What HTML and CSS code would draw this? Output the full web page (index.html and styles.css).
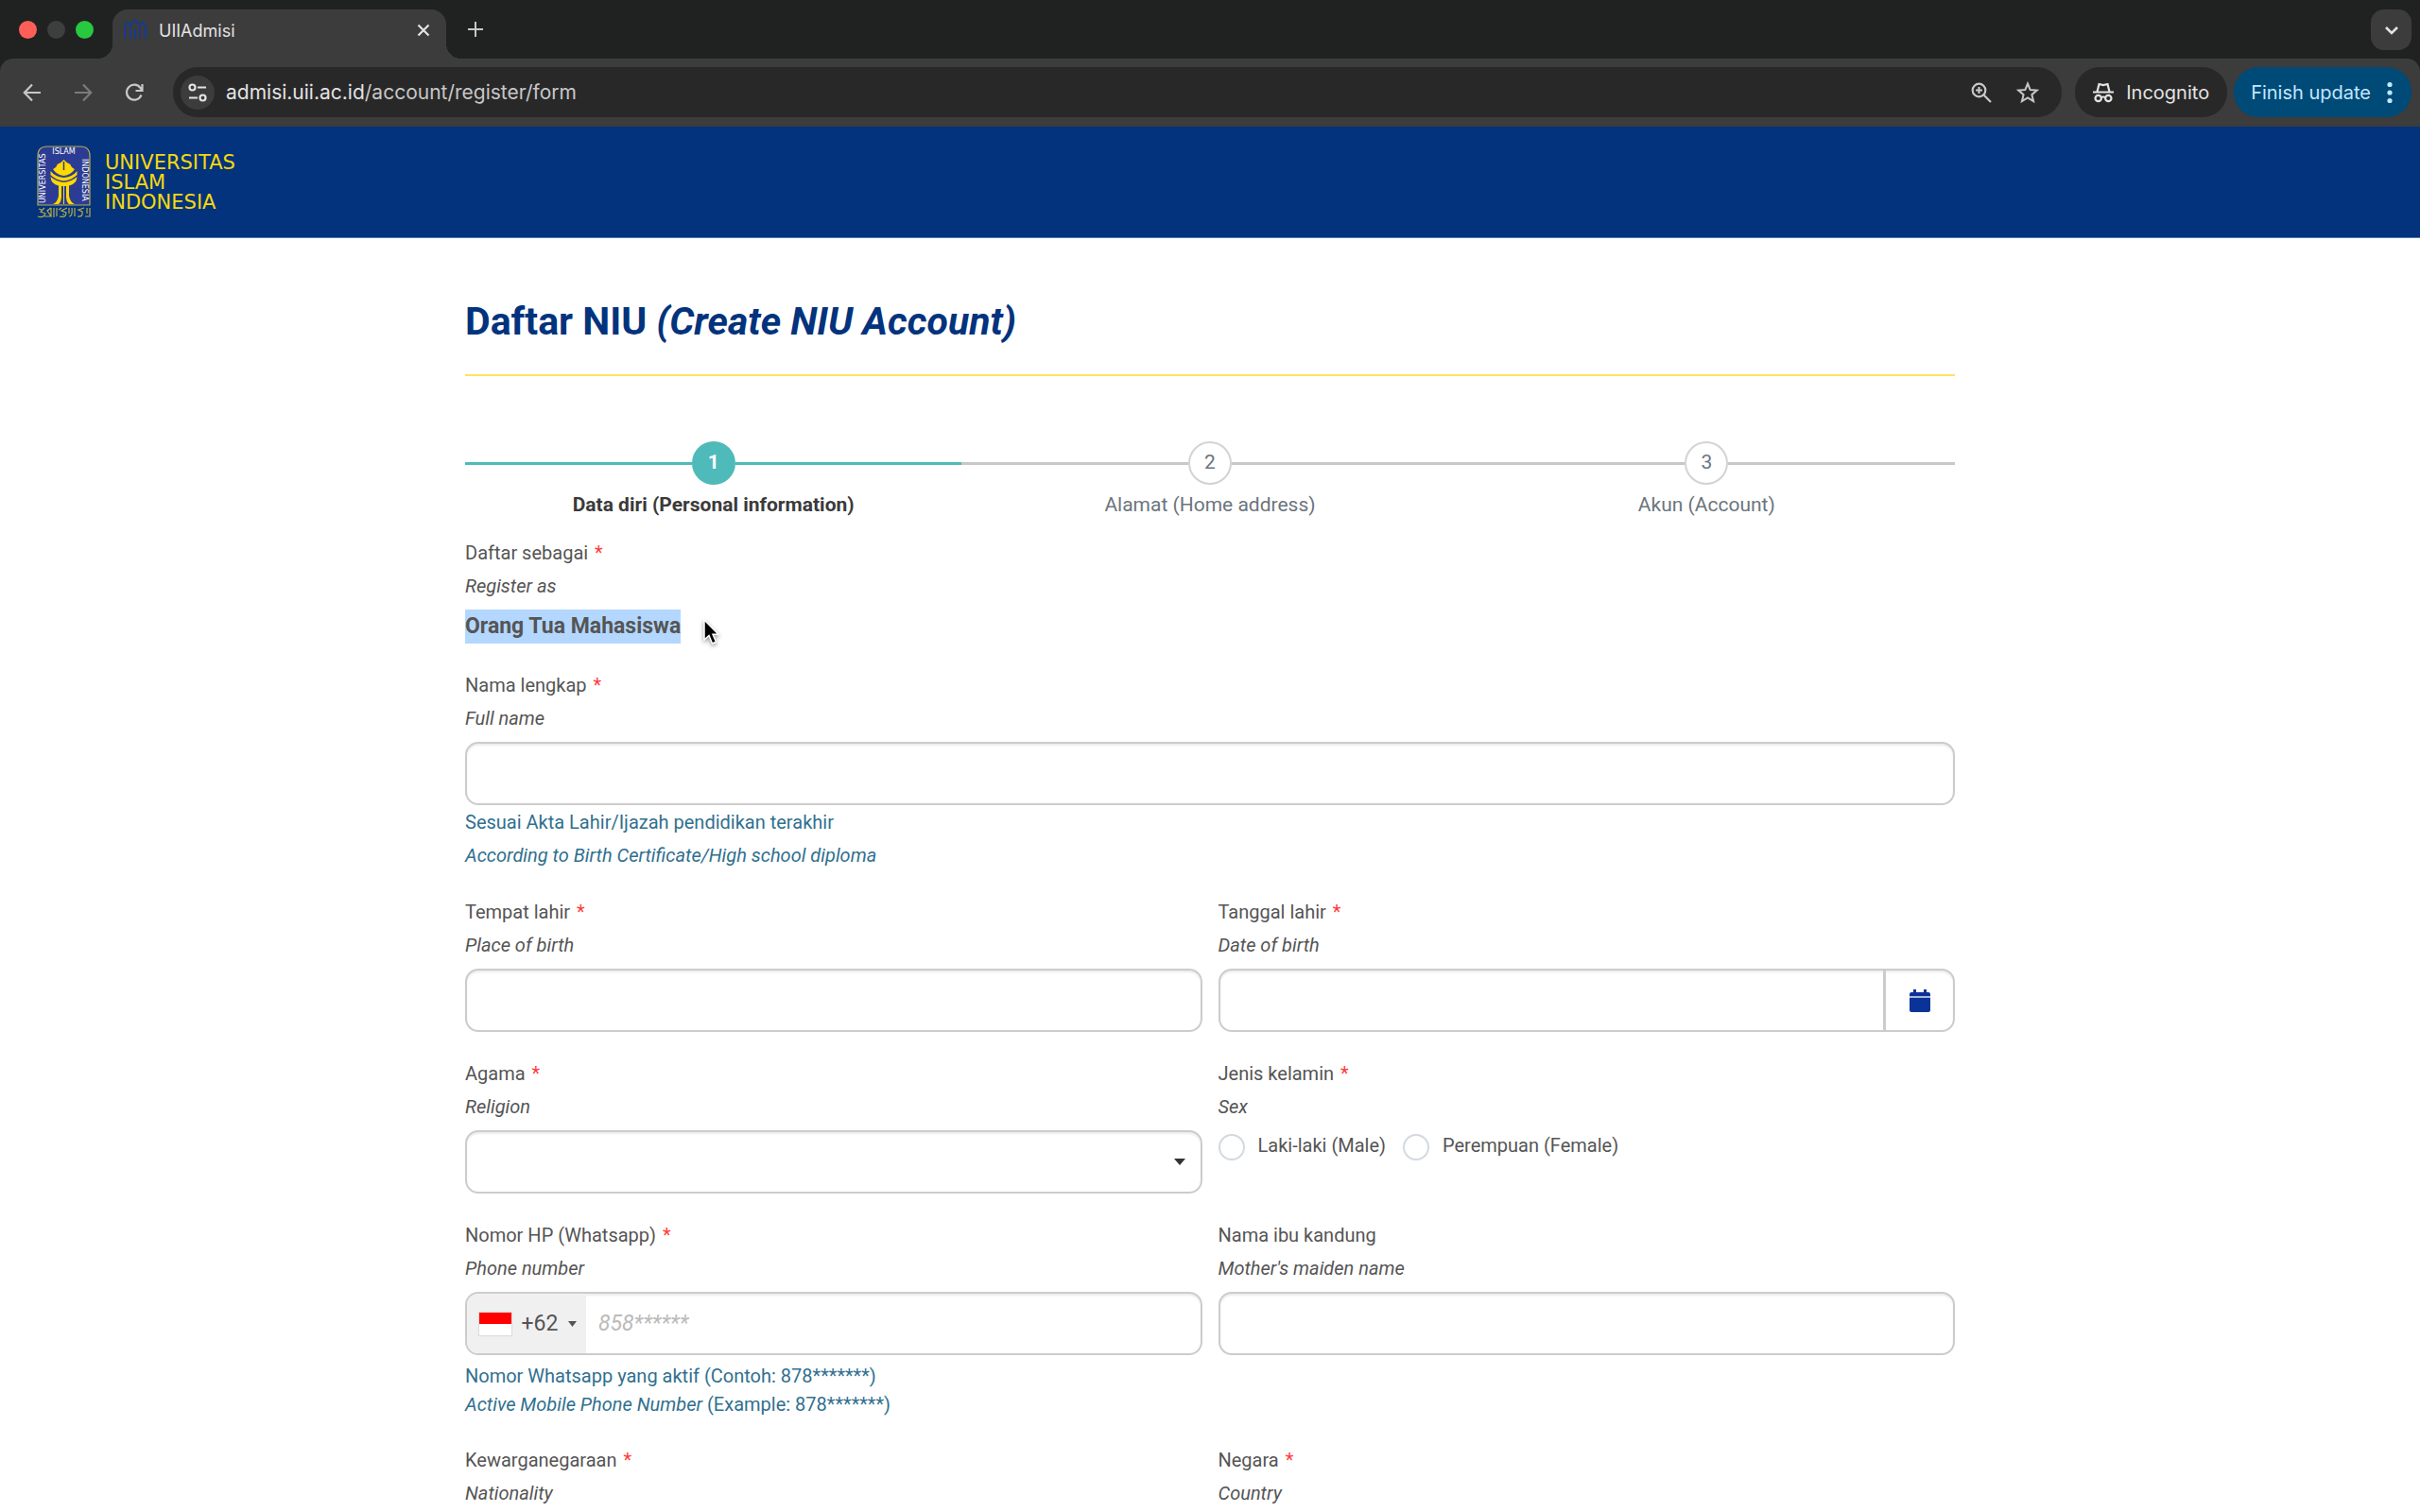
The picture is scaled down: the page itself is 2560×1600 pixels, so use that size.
FILE: index.html
```html
<!DOCTYPE html>
<html lang="id">
<head>
  <meta charset="utf-8">
  <title>UIIAdmisi</title>
  <link rel="stylesheet" href="styles.css">
</head>
<body>

<!-- Browser window -->
<div class="tab-strip">
  <div class="lights">
    <span class="light close"></span>
    <span class="light minimize"></span>
    <span class="light maximize"></span>
  </div>
  <div class="tab">
    <svg class="favicon" viewBox="0 0 24 24" fill="none" stroke="#173a8f" stroke-width="2"><path d="M1 21V9Q1 6 4 3.500L7.500 7M7 21V10Q7 5 12 1Q17 5 17 10V21M12 21V10M16.500 7L20 3.500Q23 6 23 9V21"/></svg>
    <span class="tab-title">UIIAdmisi</span>
    <button class="icon-btn tab-close" aria-label="Close tab"><svg width="14" height="14" viewBox="0 0 14 14" fill="none" stroke="#e3e3e3" stroke-width="2.2"><path d="M1.500 1.500L12.500 12.500M12.500 1.500L1.500 12.500"/></svg></button>
  </div>
  <button class="icon-btn new-tab" aria-label="New tab"><svg width="16" height="16" viewBox="0 0 16 16" fill="none" stroke="#c7c7c7" stroke-width="2"><path d="M8 0V16M0 8H16"/></svg></button>
  <button class="icon-btn tab-search" aria-label="Search tabs"><svg width="16" height="12" viewBox="0 0 16 12" fill="none" stroke="#e3e3e3" stroke-width="2.6"><path d="M2 3L8 9L14 3"/></svg></button>
</div>

<div class="toolbar">
  <div class="nav">
    <button class="icon-btn" aria-label="Back"><svg width="20" height="20" viewBox="0 0 20 20" fill="none" stroke="#c7c7c7" stroke-width="2.2"><path d="M19 10H2M10 1.500L1.800 10L10 18.500"/></svg></button>
    <button class="icon-btn" aria-label="Forward"><svg width="20" height="20" viewBox="0 0 20 20" fill="none" stroke="#7b7b7b" stroke-width="2.2"><path d="M1 10H18M10 1.500L18.200 10L10 18.500"/></svg></button>
    <button class="icon-btn" aria-label="Reload"><svg width="20" height="20" viewBox="0 0 20 20" fill="none" stroke="#c7c7c7" stroke-width="2.2"><path d="M17.500 12.500A8 8 0 1 1 16.500 5L18 7.500M18.500 1V8H11.500"/></svg></button>
  </div>
  <div class="omnibox">
    <button class="icon-btn site-info" aria-label="Site information"><svg width="20" height="20" viewBox="0 0 20 20" fill="none" stroke="#e3e3e3" stroke-width="2.2"><circle cx="4.500" cy="4.500" r="3"/><path d="M10 4.500H19M1 15.500H10"/><circle cx="15.500" cy="15.500" r="3"/></svg></button>
    <span class="url">admisi.uii.ac.id<span class="path">/account/register/form</span></span>
    <button class="icon-btn" aria-label="Zoom"><svg width="22" height="22" viewBox="0 0 22 22" fill="none" stroke="#c7c7c7" stroke-width="2.2"><circle cx="8.500" cy="8.500" r="6.800"/><path d="M13.500 13.500L21 21M8.500 5V12M5 8.500H12"/></svg></button>
    <button class="icon-btn" aria-label="Bookmark"><svg width="24" height="24" viewBox="0 0 24 24" fill="none" stroke="#c7c7c7" stroke-width="2"><path d="M12 2.500L14.700 9.100L21.800 9.600L16.400 14.200L18.100 21.200L12 17.400L5.900 21.200L7.600 14.200L2.200 9.600L9.300 9.100Z"/></svg></button>
  </div>
  <div class="pill incognito">
    <svg width="22" height="22" viewBox="0 0 22 22" fill="none" stroke="#e3e3e3" stroke-width="2.2"><path d="M0 10.500H22M4.500 10L6.500 2L11 3L15.500 2L17.500 10M9 16Q11 15 13 16"/><circle cx="5.700" cy="17" r="3.200"/><circle cx="16.300" cy="17" r="3.200"/></svg>
    <span>Incognito</span>
  </div>
  <button class="pill update">
    <span>Finish update</span>
    <svg width="6" height="24" viewBox="0 0 6 24" fill="#c2e7ff"><circle cx="3" cy="3.500" r="2.600"/><circle cx="3" cy="12" r="2.600"/><circle cx="3" cy="20.500" r="2.600"/></svg>
  </button>
</div>

<!-- Page -->
<div class="page">
  <header class="site-header">
    <a class="brand" href="#">
      <svg class="emblem" viewBox="0 0 57 77">
        <path d="M1 63V11Q1 1 11 1H46Q56 1 56 11V63Z" fill="#2c3c94" stroke="#b5ad4e" stroke-width="1.200"/>
        <g class="emblem-text">
          <text x="28.500" y="9" text-anchor="middle">ISLAM</text>
          <text transform="translate(9 61) rotate(-90)">UNIVERSITAS</text>
          <text transform="translate(47.500 14) rotate(90)">INDONESIA</text>
        </g>
        <g fill="#ffd900">
          <path d="M28.500 15Q32 19 35.500 20Q36 23 40 25Q36 31 28.500 32Q21 31 17 25Q21 23 21.500 20Q25 19 28.500 15Z"/>
          <path d="M14.500 27Q19 33 28.500 34Q38 33 42.500 27V31Q37 36.500 28.500 37.500Q20 36.500 14.500 31Z"/>
          <path d="M14.500 33Q20 38 28.500 39Q37 38 42.500 33Q42 41 34 42.500V53Q35 60 40 62H34Q31 59 31 54V43H26V54Q26 59 23 62H17Q22 60 23 53V42.500Q15 41 14.500 33Z"/>
          <path d="M28 43H29V62H28Z"/>
        </g>
        <path d="M28.500 17V26" stroke="#2c3c94" stroke-width="1.500"/>
        <path d="M1 75Q7 77 9 72L4 70L8 66M8 75H15L11 69L15 66M2 67L5 68M15 66V75M18 66V76M21 66V75M24 75Q31 77 31 71L26 69L32 66M23 68L26 66M27 73H29M34 75Q38 75 37 66M34 66V72M40 66V75M43 75Q49 76 48 70L44 68L50 66M51 75H56V66M53 66V72" fill="none" stroke="#b5ad4e" stroke-width="1.200"/>
      </svg>
      <span class="brand-name">UNIVERSITAS<br>ISLAM<br>INDONESIA</span>
    </a>
  </header>

  <main class="container">
    <h1>Daftar NIU <em>(Create NIU Account)</em></h1>

    <ol class="steps">
      <li class="step active"><div class="track"><span class="number">1</span></div>Data diri (Personal information)</li>
      <li class="step"><div class="track"><span class="number">2</span></div>Alamat (Home address)</li>
      <li class="step"><div class="track"><span class="number">3</span></div>Akun (Account)</li>
    </ol>

    <form class="form">
      <div class="field full">
        <div class="label">Daftar sebagai <b>*</b><em>Register as</em></div>
        <div class="value"><mark>Orang Tua Mahasiswa</mark><svg class="cursor" viewBox="0 0 18 28"><path d="M2 1V22L7 17.500L10.500 26L14.500 24.300L11 16.300H17Z" fill="#000" stroke="#fff" stroke-width="1.500"/></svg></div>
      </div>

      <div class="field full">
        <label class="label" for="name">Nama lengkap <b>*</b><em>Full name</em></label>
        <input class="control" type="text" id="name">
        <div class="hint">Sesuai Akta Lahir/Ijazah pendidikan terakhir<em>According to Birth Certificate/High school diploma</em></div>
      </div>

      <div class="field">
        <label class="label" for="birthplace">Tempat lahir <b>*</b><em>Place of birth</em></label>
        <input class="control" type="text" id="birthplace">
      </div>
      <div class="field">
        <label class="label" for="birthdate">Tanggal lahir <b>*</b><em>Date of birth</em></label>
        <div class="control group">
          <input type="text" id="birthdate">
          <button type="button" class="calendar" aria-label="Pilih tanggal"><svg width="22" height="24" viewBox="0 0 22 24"><path d="M0 7V5Q0 3 2 3H4V0H7V3H15V0H18V3H20Q22 3 22 5V7ZM0 9H22V22Q22 24 20 24H2Q0 24 0 22Z" fill="#0b3397"/><path d="M0 7H22V9H0Z" fill="#a9b8dc"/></svg></button>
        </div>
      </div>

      <div class="field">
        <label class="label" for="religion">Agama <b>*</b><em>Religion</em></label>
        <div class="select">
          <select class="control" id="religion"><option></option></select>
          <svg class="arrow" viewBox="0 0 12 7"><path d="M0 0H12L6 7Z" fill="#333"/></svg>
        </div>
      </div>
      <div class="field">
        <div class="label" id="sex">Jenis kelamin <b>*</b><em>Sex</em></div>
        <div class="radios" role="radiogroup" aria-labelledby="sex">
          <label><input type="radio" name="sex">Laki-laki (Male)</label>
          <label><input type="radio" name="sex">Perempuan (Female)</label>
        </div>
      </div>

      <div class="field">
        <label class="label" for="phone">Nomor HP (Whatsapp) <b>*</b><em>Phone number</em></label>
        <div class="control group">
          <button type="button" class="prefix"><span class="flag"></span>+62<svg width="9" height="6" viewBox="0 0 9 6"><path d="M0 0H9L4.500 6Z" fill="#555"/></svg></button>
          <input type="tel" id="phone" placeholder="858******">
        </div>
        <div class="hint compact">Nomor Whatsapp yang aktif (Contoh: 878*******)<br><i>Active Mobile Phone Number</i> (Example: 878*******)</div>
      </div>
      <div class="field">
        <label class="label" for="mother">Nama ibu kandung<em>Mother's maiden name</em></label>
        <input class="control" type="text" id="mother">
      </div>

      <div class="field">
        <label class="label" for="nationality">Kewarganegaraan <b>*</b><em>Nationality</em></label>
        <select class="control" id="nationality"><option></option></select>
      </div>
      <div class="field">
        <label class="label" for="country">Negara <b>*</b><em>Country</em></label>
        <select class="control" id="country"><option></option></select>
      </div>
    </form>
  </main>
</div>

</body>
</html>
```
FILE: styles.css
```css
* {
  box-sizing: border-box;
}

body {
  margin: 0;
  height: 100vh;
  display: flex;
  flex-direction: column;
  background: #202221;
  font-family: Roboto, sans-serif;
  font-size: 20px;
  color: #555;
}

button {
  font: inherit;
  border: 0;
  padding: 0;
  background: none;
}

svg {
  display: block;
  flex: none;
}

/* Browser window */
.tab-strip,
.toolbar {
  font-family: Inter, sans-serif;
  color: #e3e3e3;
  display: flex;
  flex: none;
}

.tab-strip {
  height: 62px;
  padding: 0 9px 0 20px;
}

.icon-btn {
  display: grid;
  place-items: center;
}

.lights {
  display: flex;
  gap: 11px;
  align-items: center;
  width: 99px;
}

.light {
  width: 19px;
  height: 19px;
  border-radius: 50%;
}

.close { background: #ff5f57; }
.minimize { background: #3d3f3e; }
.maximize { background: #28c840; }

.tab {
  position: relative;
  display: flex;
  align-items: center;
  width: 353px;
  margin-top: 10px;
  padding: 0 17px 8px 12px;
  background: #3c3c3c;
  border-radius: 16px 16px 0 0;
  font-size: 18px;
}

/* curved feet of the tab */
.tab::before,
.tab::after {
  content: "";
  position: absolute;
  bottom: 0;
  width: 16px;
  height: 16px;
}

.tab::before {
  right: 100%;
  background: radial-gradient(circle at 0 0, #202221 16px, #3c3c3c 16px);
}

.tab::after {
  left: 100%;
  background: radial-gradient(circle at 100% 0, #202221 16px, #3c3c3c 16px);
}

.favicon {
  width: 24px;
  height: 24px;
  margin-right: 13px;
}

.tab-title {
  flex: 1;
}

.new-tab {
  margin: 0 auto 0 23px;
}

.tab-search {
  width: 43px;
  height: 43px;
  margin-top: 10px;
  background: #3c3c3c;
  border-radius: 14px;
}

.toolbar {
  height: 72px;
  padding: 9px 9px 10px 24px;
  background: #3c3c3c;
  border-radius: 14px 14px 0 0;
}

.nav {
  display: flex;
  gap: 34px;
  width: 159px;
}

.omnibox {
  flex: 1;
  display: flex;
  align-items: center;
  gap: 26px;
  margin-right: 14px;
  padding: 0 24px 0 8px;
  background: #282828;
  border-radius: 26px;
  font-size: 21px;
}

.site-info {
  width: 36px;
  height: 36px;
  margin-right: -14px;
  background: #3c3c3c;
  border-radius: 50%;
}

.url {
  flex: 1;
}

.path {
  color: #c7c7c7;
}

.pill {
  display: flex;
  align-items: center;
  border-radius: 26px;
}

.incognito {
  gap: 13px;
  padding: 0 19px;
  margin-right: 7px;
  background: #282828;
}

.update {
  gap: 17px;
  padding: 0 20px 0 18px;
  background: #004a77;
  color: #c2e7ff;
}

/* Site header */
.page {
  flex: 1;
  overflow: hidden;
  background: #fff;
}

.site-header {
  height: 118px;
  padding: 20px 39px;
  background: #03337d;
  border-bottom: 1px solid #5677aa;
}

.brand {
  display: flex;
  gap: 15px;
  color: #f7d90a;
  text-decoration: none;
}

.emblem {
  width: 57px;
  height: 77px;
}

.emblem-text {
  fill: #fff;
  font-family: "DejaVu Sans", sans-serif;
  font-size: 8px;
}

.brand-name {
  font-family: "DejaVu Sans", sans-serif;
  font-size: 21px;
  line-height: 21px;
  margin-top: 8px;
}

/* Content */
.container {
  max-width: 1576px;
  margin: 0 auto;
  padding-top: 64px;
}

h1 {
  margin: 0 0 69px;
  padding-bottom: 32px;
  border-bottom: 2px solid #ffe266;
  color: #03337d;
  font-size: 41px;
  line-height: 48px;
}

.steps {
  display: flex;
  margin: 0 0 19px;
  padding: 0;
  list-style: none;
}

.step {
  flex: 1;
  text-align: center;
  font-size: 21px;
  line-height: 32px;
  color: #6c757d;
}

.track {
  display: flex;
  align-items: center;
  margin-bottom: 5px;
}

.track::before,
.track::after {
  content: "";
  flex: 1;
  height: 3px;
  background: #c8c8c8;
}

.number {
  width: 46px;
  height: 46px;
  border: 2px solid #d3d3d3;
  border-radius: 50%;
  line-height: 40px;
}

.active {
  font-weight: bold;
  color: #3a3a3a;
}

.active .track::before,
.active .track::after,
.active .number {
  background: #4fbaba;
}

.active .number {
  border-color: #4fbaba;
  color: #fff;
}

.form {
  display: grid;
  grid-template-columns: 1fr 1fr;
  gap: 28px 17px;
  line-height: 32px;
}

.full {
  grid-column: 1 / -1;
}

.label {
  display: block;
  margin-bottom: 9px;
}

.label b {
  margin-left: 2px;
  font-weight: normal;
  color: #ff3b3b;
}

.label em,
.hint em {
  display: block;
  margin-top: 3px;
}

.value {
  position: relative;
  font-size: 23px;
  font-weight: bold;
  line-height: 36px;
}

.value mark {
  display: inline-block;
  background: #b3d7ff;
  color: inherit;
}

.cursor {
  position: absolute;
  left: 251px;
  top: 10px;
  width: 18px;
  height: 28px;
  filter: drop-shadow(0 2px 2px rgba(0, 0, 0, 0.4));
}

.control {
  display: block;
  width: 100%;
  height: 67px;
  padding: 0 14px;
  background: #fff;
  border: 2px solid #ccc;
  border-radius: 14px;
  box-shadow: inset 0 2px 2px rgba(0, 0, 0, 0.08);
  font: inherit;
  font-size: 23px;
  color: #555;
  appearance: none;
}

.group {
  display: flex;
  padding: 0;
  overflow: hidden;
}

.group input {
  flex: 1;
  min-width: 0;
  padding: 0 13px;
  border: 0;
  background: none;
  font: inherit;
}

.group input::placeholder {
  color: #bbb;
  font-style: italic;
}

.calendar {
  display: grid;
  place-items: center;
  width: 74px;
  border-left: 3px solid #ccc;
}

.select {
  position: relative;
}

.arrow {
  position: absolute;
  top: 30px;
  right: 18px;
  width: 12px;
  height: 7px;
}

.radios {
  display: flex;
  gap: 18px;
}

.radios label {
  display: flex;
  align-items: center;
  gap: 14px;
}

.radios input {
  appearance: none;
  width: 28px;
  height: 28px;
  margin: 4px 0 0;
  border: 2px solid #d3d9e0;
  border-radius: 50%;
}

.prefix {
  display: flex;
  align-items: center;
  width: 126px;
  padding: 0 10px 0 13px;
  justify-content: space-between;
  background: #f0f0f0;
  color: #555;
}

.flag {
  width: 34px;
  height: 24px;
  background: linear-gradient(#f00 50%, #fff 50%);
  box-shadow: 0 0 1px 1px rgba(0, 0, 0, 0.08);
}

.hint {
  margin: 2px 0 0;
  color: #31708f;
}

.compact {
  margin: 7px 0 0;
  line-height: 30px;
}
```
